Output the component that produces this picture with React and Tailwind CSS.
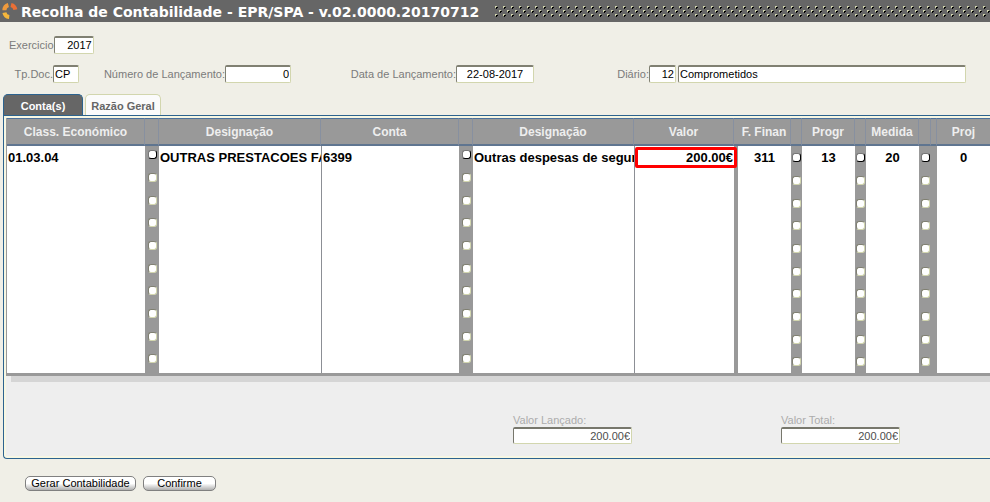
const FONT = 'font-["Liberation_Sans",Arial,sans-serif]';

const COLUMNS = [
  { key: "classe", label: "Class. Económico", width: "w-[138px]", align: "text-left" },
  { key: "boxClasse", kind: "box", high: true, width: "w-[14px]" },
  { key: "desigClasse", label: "Designação", width: "w-[162px]", align: "text-left" },
  { key: "conta", label: "Conta", width: "w-[138px]", align: "text-left" },
  { key: "boxConta", kind: "box", high: true, width: "w-[14px]" },
  { key: "desigConta", label: "Designação", width: "w-[161px]", align: "text-left" },
  { key: "valor", label: "Valor", width: "w-[100px]", align: "text-right" },
  { key: "gap1", kind: "gap", width: "w-[4px]" },
  { key: "finan", label: "F. Finan", width: "w-[53px]", align: "text-center" },
  { key: "boxFinan", kind: "box", width: "w-[11px]" },
  { key: "progr", label: "Progr", width: "w-[53px]", align: "text-center" },
  { key: "boxProgr", kind: "box", width: "w-[11px]" },
  { key: "medida", label: "Medida", width: "w-[53px]", align: "text-center" },
  { key: "boxMedida", kind: "box", width: "w-[12px]" },
  { key: "gap2", kind: "gap", width: "w-[6px]" },
  { key: "proj", label: "Proj", width: "", align: "text-center", last: true },
];

const FIRST_ROW = {
  classe: "01.03.04",
  desigClasse: "OUTRAS PRESTACOES FA",
  conta: "6399",
  desigConta: "Outras despesas de segur",
  valor: "200.00€",
  finan: "311",
  progr: "13",
  medida: "20",
  proj: "0",
};

const ROWS = [FIRST_ROW, {}, {}, {}, {}, {}, {}, {}, {}, {}];

function Logo() {
  return (
    <svg className="h-[18px] w-[17px] shrink-0" viewBox="0 0 17 18" aria-hidden="true">
      <g fill="none" strokeWidth="4">
        <path d="M2.4 8.2A5.5 5.5 0 0 1 6.4 3" stroke="#f09a3c" />
        <path d="M9 3A6 6 0 0 1 13.4 7.6" stroke="#ea6f35" />
        <path d="M2.4 10.6A5.5 5.5 0 0 0 7.2 15" stroke="#f4b63c" />
      </g>
    </svg>
  );
}

function Dots() {
  return (
    <svg className="mt-px h-[11px] min-w-0 flex-1" shapeRendering="crispEdges" aria-hidden="true">
      <defs>
        <pattern id="dots" width="8" height="8" patternUnits="userSpaceOnUse">
          <path d="M1 1h2v1h-1v1h-1zM5 5h2v1h-1v1h-1z" fill="#000" />
          <path d="M0 0h2v1h-1v1h-1zM4 4h2v1h-1v1h-1z" fill="#d2d6ae" />
        </pattern>
      </defs>
      <rect width="100%" height="11" fill="url(#dots)" />
    </svg>
  );
}

function Field({ id, label, value, width, align = "text-right" }) {
  return (
    <div className="flex items-center">
      {label && (
        <label htmlFor={id} className="whitespace-nowrap text-[#7b7b7b]">
          {label}
        </label>
      )}
      <input
        id={id}
        aria-label={label ? undefined : "Descrição do diário"}
        defaultValue={value}
        className={`h-[18px] rounded-[2px] border border-t-2 border-[#d2d6ae] border-t-[#808072] border-l-[#808072] bg-white px-px pb-px text-black outline-none ${width} ${align}`}
      />
    </div>
  );
}

function Total({ id, label, value }) {
  return (
    <div className="flex w-[119px] flex-col">
      <label htmlFor={id} className="leading-[14px] text-[#acacac]">
        {label}
      </label>
      <input
        id={id}
        readOnly
        defaultValue={value}
        className="h-[17px] w-full rounded-[2px] border border-t-2 border-[#d2d6ae] border-t-[#77776c] border-l-[#77776c] bg-white px-px text-right text-[#4d4d4d] outline-none"
      />
    </div>
  );
}

function Cell({ col, value, row }) {
  if (col.kind === "gap") return <td className="bg-[#999] p-0" />;
  if (col.kind === "box") {
    return (
      <td className={`bg-[#999] p-0 align-top ${col.high ? "pt-1" : "pt-[7px]"}`}>
        <input
          type="checkbox"
          aria-label={`Selecionar linha ${row + 1}`}
          className={`mx-auto block size-[9px] appearance-none rounded-[3px] border bg-white ${
            row === 0
              ? "border-black border-t-[#777] border-l-[#777]"
              : "border-[#d2d6ae] border-t-[#808072] border-l-[#808072]"
          }`}
        />
      </td>
    );
  }
  const highlighted = col.key === "valor" && row === 0;
  return (
    <td
      className={`bg-white px-px py-0 whitespace-nowrap ${highlighted ? "relative" : "overflow-hidden"} ${col.align} ${
        col.key === "conta" || col.key === "valor" ? "border-l border-[#8c8f95]" : ""
      }`}
    >
      {value}
      {highlighted && (
        <span className="absolute top-px -right-[3px] bottom-px left-0 rounded-[2px] border-3 border-[#ff0000]" />
      )}
    </td>
  );
}

export default function App() {
  return (
    <div className={`min-h-screen bg-[#f0efe7] text-[11px] ${FONT}`}>
      <header className="flex h-[22px] items-center bg-[#666] pl-[2px]">
        <Logo />
        <h1 className='mr-4 ml-[2px] pt-[2px] text-[14px] font-bold whitespace-nowrap text-white font-["DejaVu_Sans",Verdana,sans-serif]'>
          Recolha de Contabilidade - EPR/SPA - v.02.0000.20170712
        </h1>
        <Dots />
      </header>

      <form className="pt-[14px]">
        <div className="flex pl-[9px]">
          <Field id="exercicio" label="Exercicio" value="2017" width="w-[40px]" />
        </div>
        <div className="mt-[11px] flex">
          <div className="flex w-[79px] justify-end">
            <Field id="tpdoc" label="Tp.Doc." value="CP" width="w-[26px]" align="text-left" />
          </div>
          <div className="flex w-[212px] justify-end">
            <Field id="numero" label="Número de Lançamento:" value="0" width="w-[66px]" />
          </div>
          <div className="flex w-[243px] justify-end">
            <Field id="data" label="Data de Lançamento:" value="22-08-2017" width="w-[78px]" align="text-center" />
          </div>
          <div className="flex w-[142px] justify-end">
            <Field id="diario" label="Diário:" value="12" width="w-[27px]" />
          </div>
          <div className="ml-[2px]">
            <Field id="descricao" value="Comprometidos" width="w-[288px]" align="text-left" />
          </div>
        </div>

        <div role="tablist" className="mt-[11px] flex items-end gap-[2px] pl-[3px] font-bold">
          <button type="button" role="tab" aria-selected="true" className="h-[21px] w-[80px] rounded-t-[5px] border border-b-0 border-[#2c638f] bg-[#666] pt-[2px] text-white">
            Conta(s)
          </button>
          <button type="button" role="tab" aria-selected="false" className="h-[21px] w-[76px] rounded-t-[5px] border border-b-0 border-[#d2d6ae] bg-[#fbfbfb] pt-[2px] text-[#666]">
            Razão Geral
          </button>
        </div>

        <section className="ml-[3px] rounded-bl-[4px] border border-r-0 border-[#2c638f] bg-[#f7f7e3] pt-[2px] pb-[2px] pl-[2px]">
          <div className="bg-[#eee] pb-[12px]">
            <table className="w-full table-fixed border-separate border-spacing-0 border-b-3 border-l border-[#999] text-[13px] font-bold text-black">
              <colgroup>
                {COLUMNS.map((c) => (
                  <col key={c.key} className={c.width} />
                ))}
              </colgroup>
              <thead>
                <tr className="h-[28px] bg-[#999] text-[12px] text-[#eee]">
                  {COLUMNS.map((c) => (
                    <th
                      key={c.key}
                      className={`border-t border-b-2 border-t-[#4c719c] border-b-[#5f7590] p-0 whitespace-nowrap ${
                        c.key === "gap1" || c.last ? "" : "border-r border-r-[#8790a0]"
                      }`}
                    >
                      {c.label}
                    </th>
                  ))}
                </tr>
              </thead>
              <tbody>
                {ROWS.map((r, i) => (
                  <tr key={i} className={i % 3 === 2 ? "h-[22px]" : "h-[23px]"}>
                    {COLUMNS.map((c) => (
                      <Cell key={c.key} col={c} value={r[c.key]} row={i} />
                    ))}
                  </tr>
                ))}
              </tbody>
            </table>
            <div className="ml-[5px] h-[6px] bg-[#d5d5d5]" />
            <div className="mt-[31px] flex gap-[149px] pl-[507px]">
              <Total id="lancado" label="Valor Lançado:" value="200.00€" />
              <Total id="total" label="Valor Total:" value="200.00€" />
            </div>
          </div>
        </section>

        <div className="mt-[17px] flex gap-[7px] pl-[25px]">
          {[
            ["Gerar Contabilidade", "w-[111px]"],
            ["Confirme", "w-[73px]"],
          ].map(([text, width]) => (
            <button
              key={text}
              type="button"
              className={`h-[15px] rounded-[5px] border border-[#808080] bg-linear-to-b from-white from-50% to-[#b0b0b0] leading-[13px] whitespace-nowrap text-black ${width}`}
            >
              {text}
            </button>
          ))}
        </div>
      </form>
    </div>
  );
}
